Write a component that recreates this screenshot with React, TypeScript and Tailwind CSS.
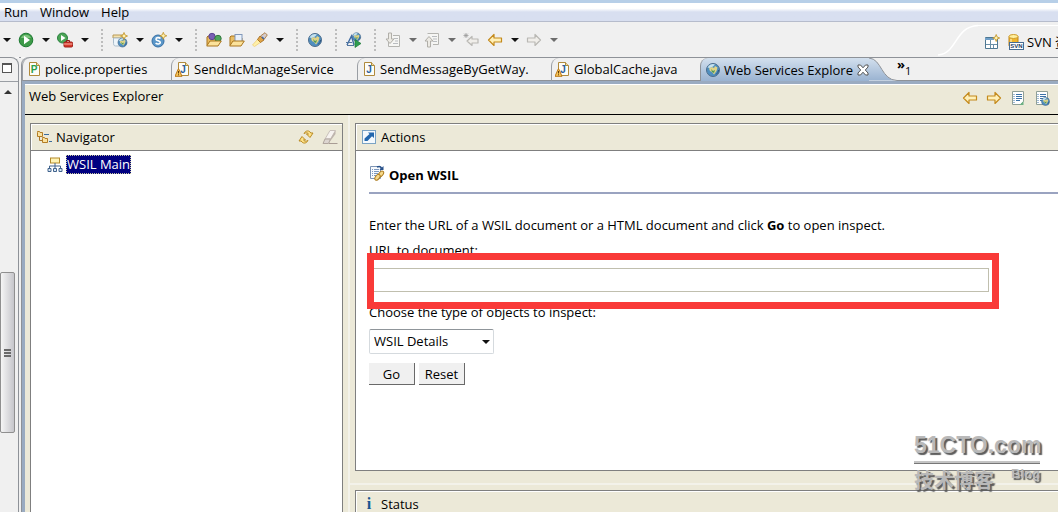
import { useState } from 'react';
import type { ReactNode } from 'react';

const MENUS = ['Run', 'Window', 'Help'];

const TABS = [
  { name: 'police.properties', icon: 'properties', width: 'w-[149px]' },
  { name: 'SendIdcManageService', icon: 'warning', width: 'w-[186px]' },
  { name: 'SendMessageByGetWay.', icon: 'java', width: 'w-[194px]' },
  { name: 'GlobalCache.java', icon: 'warning', width: 'w-[149px]' },
];

function Svg({ children }: { children: ReactNode }) {
  return (
    <svg className="w-4 h-4 shrink-0" viewBox="0 0 16 16" fill="none" aria-hidden="true">
      {children}
    </svg>
  );
}

function RunIcon() {
  return (
    <Svg>
      <circle cx="8" cy="8" r="6.8" fill="#3d9a48" stroke="#1e7a33" />
      <path d="M3 6a5.5 5.5 0 0 1 10 0z" fill="#7cc47c" />
      <path d="M6 3.8v8.4L12 8z" fill="#fff" />
    </Svg>
  );
}

function ExternalToolsIcon() {
  return (
    <Svg>
      <circle cx="5.5" cy="6" r="5" fill="#4aa455" stroke="#2b8040" />
      <path d="M4 3v6l4.5-3z" fill="#fff" />
      <path d="M9.5 10V8.5h3V10" stroke="#8a1a14" />
      <rect x="7" y="10" width="8.5" height="5" rx="1" fill="#d83a2c" stroke="#9e1d16" />
      <path d="M7 12h8.5" stroke="#f6b3a8" />
    </Svg>
  );
}

function Globe({ cx = 8, cy = 8, r = 6.5 }: { cx?: number; cy?: number; r?: number }) {
  const s = r / 6.5;
  return (
    <g transform={`translate(${cx} ${cy}) scale(${s})`}>
      <circle r="6.5" fill="#4f8fc0" stroke="#4c6c8c" />
      <path d="M-5.5-2.5A6 6 0 0 1 2-5.6L0-3.5-3-2z" fill="#c6e2ee" />
      <path d="M-4-1.5-1-3l2 1 1-2 2.5 1.5L3.5 1 1 4.5-1 2-3 1z" fill="#e0d387" />
      <path d="M-2-1 0 1l2-1-1 3-2-1z" fill="#4e9a58" />
      <path d="M3 4.5A5.5 5.5 0 0 0 5.5 0" stroke="#26507c" />
    </g>
  );
}

function Sparkle({ x = 12, y = 4 }: { x?: number; y?: number }) {
  return (
    <path
      transform={`translate(${x} ${y})`}
      d="M0-3.5 1-1 3.5 0 1 1 0 3.5-1 1-3.5 0-1-1z"
      fill="#fff3b0"
      stroke="#c08f22"
      strokeWidth="0.8"
    />
  );
}

function NewServiceIcon() {
  return (
    <Svg>
      <path d="M1 3h10v3H1z" fill="#f4e2b0" stroke="#b99a55" />
      <path d="M1.5 6h10v8h-8c-2 0-2-2-2-4z" fill="#eef5fa" stroke="#a9bccb" />
      <Globe cx={10.5} cy={10.5} r={4.5} />
      <Sparkle />
    </Svg>
  );
}

function NewServletIcon() {
  return (
    <Svg>
      <circle cx="7" cy="9" r="6" fill="#5a96c8" stroke="#366fa5" />
      <path d="M9.5 6.5C8 5 4.8 5.5 5 7.3c.2 1.9 4.3 1.2 4.3 3.2 0 1.7-3.2 2-4.7.6" stroke="#fff" strokeWidth="1.6" />
      <Sparkle x={12.3} y={3.8} />
    </Svg>
  );
}

function Folder({ children }: { children?: ReactNode }) {
  return (
    <Svg>
      <path d="M1 13V5l1-1h4l1 2h6v3" fill="#e9bd62" stroke="#a9741c" />
      {children}
      <path d="M.7 14 4 9h11.3L12 14z" fill="#fbe29b" stroke="#a9741c" />
    </Svg>
  );
}

function TorchIcon() {
  return (
    <Svg>
      <path d="m.5 13 5.5-6 3 3-6.5 4.5z" fill="#fff0a8" stroke="#edcf78" strokeWidth="0.8" />
      <path d="m5.5 7.5 2.5-3.5 4 4-3.5 2.5z" fill="#e0a548" stroke="#9b6318" strokeWidth="0.8" />
      <path d="m8.5 4 4.5-3.3L15.3 3 12 7.500z" fill="#d3cbcc" stroke="#a56d2b" strokeWidth="0.8" />
      <path d="m10 5 2 2" stroke="#3f6aa8" strokeWidth="1.5" />
    </Svg>
  );
}

function LaunchExplorerIcon() {
  return (
    <Svg>
      <Globe cx={10.5} cy={5} r={4.2} />
      <path d="M1 13 5.5 4 8 13" stroke="#3f6ba3" strokeWidth="1.4" />
      <path d="M0 10.5h6M1 13.5h7" stroke="#52769f" />
      <path d="M9 7.5v8l6-4z" fill="#2f9d50" stroke="#1d7a38" strokeWidth="0.7" />
    </Svg>
  );
}

function AnnotationIcon({ up = false }: { up?: boolean }) {
  return (
    <Svg>
      {up ? (
        <path d="M3.5 1.5h11v11H9" fill="#f6f6f4" stroke="#b4b4b0" />
      ) : (
        <path d="M8 3.5h6.5v11h-11V10" fill="#f6f6f4" stroke="#b4b4b0" />
      )}
      <path d={up ? 'M8 4.5h5M9 7h4M9 9.5h4' : 'M9 6.5h4M10 9h3M8 11.5h5'} stroke="#b9bcc0" />
      <path
        transform={up ? 'translate(0 16) scale(1 -1)' : undefined}
        d="M3.5 1h3v6H9l-4 4.5L1 7h2.5z"
        fill="#eceae4"
        stroke="#b0aea8"
      />
    </Svg>
  );
}

function ArrowIcon({ right = false, disabled = false, star = false }: { right?: boolean; disabled?: boolean; star?: boolean }) {
  return (
    <Svg>
      <path
        transform={right ? 'translate(16 0) scale(-1 1)' : undefined}
        d={star ? 'M4 9l5-4.5V7h6v4H9v2.5z' : 'M1.5 8 7 2.5V6h7.5v4H7v3.5z'}
        fill={disabled ? '#f0eeea' : '#fff0b8'}
        stroke={disabled ? '#b9b8b4' : '#c48a1c'}
        strokeWidth="1.2"
        strokeLinejoin="round"
      />
      {star && <path d="M3 1v5M.5 3.5h5M1.2 1.7l3.6 3.6M4.8 1.7 1.2 5.3" stroke="#9a9a9a" strokeWidth="0.8" />}
    </Svg>
  );
}

function PerspectiveIcon() {
  return (
    <Svg>
      <path d="M1.5 3.5h12v11h-12z" fill="#fff" stroke="#4d7792" />
      <path d="M1 4h9v2H1z" fill="#6f9fc8" />
      <path d="M6.5 6v8M2 10.5h11M9.5 10v4" stroke="#6a8fa8" />
      <Sparkle x={12.2} y={4} />
    </Svg>
  );
}

function SvnIcon() {
  return (
    <Svg>
      <path d="M1 2.5v9c1 2 8 2 9 0v-9z" fill="#f0b52c" stroke="#bf8519" />
      <ellipse cx="5.5" cy="2.5" rx="4.5" ry="2" fill="#fff0a0" stroke="#cf9c2a" />
      <path d="M3 5v6" stroke="#ffe694" strokeWidth="1.5" />
      <rect x="1.5" y="8.5" width="14" height="7" fill="#fff" stroke="#466c92" />
      <text x="8.5" y="14.3" textAnchor="middle" fontSize="6" fontWeight="bold" fontFamily="Liberation Sans, sans-serif" fill="#1d3c63">
        SVN
      </text>
    </Svg>
  );
}

function FileIcon({ kind }: { kind: string }) {
  const letter = kind === 'properties' ? 'P' : 'J';
  return (
    <Svg>
      <path d="M3.5 1.5h7l3 3v10h-10z" fill="#fdfdf8" stroke="#b08a3c" />
      <path d="M10.5 1.5v3h3" fill="#efdca8" stroke="#b08a3c" />
      <text
        x="8"
        y="12"
        textAnchor="middle"
        fontSize="10"
        fontWeight="bold"
        fontFamily="Liberation Sans, sans-serif"
        fill={kind === 'properties' ? '#28a04a' : '#2b5f9e'}
      >
        {letter}
      </text>
      {kind === 'warning' && (
        <>
          <path d="M3.5 7.5 7 15.3H0z" fill="#fbc75a" stroke="#b97716" strokeLinejoin="round" />
          <path d="M3.5 10v2.5M3.5 13.3v1" stroke="#5c3b08" />
        </>
      )}
    </Svg>
  );
}

function PageIcon({ globe = false }: { globe?: boolean }) {
  return (
    <Svg>
      <path d="M2.5 1.5h11v10l-3 3h-8z" fill="#fff" stroke="#8f9f97" />
      <path d="M6 4.5h6M6 6.5h6M6 8.5h6M6 10.5h4M3.5 4.5h1M3.5 6.5h1M3.5 8.5h1M3.5 10.5h1M3.5 12.5h1" stroke="#3c72a8" />
      {globe ? <Globe cx={11.5} cy={11.5} r={4} /> : <path d="M13.5 11v4h-4z" fill="#6db184" />}
    </Svg>
  );
}

function NavigatorIcon() {
  return (
    <Svg>
      <path d="M1.5 3.5v-1h2l.5 1h2.5v4h-5zM6.5 9.5v-1h2l.5 1h2.5v4h-5z" fill="#fbe3a0" stroke="#b47c24" />
      <path d="M3.5 8v3.5H6" stroke="#a8762c" />
      <path d="M8 5.5h5M13 12.5h3" stroke="#3d6d9c" />
    </Svg>
  );
}

function TreeIcon() {
  return (
    <Svg>
      <rect x="3.5" y="1" width="9" height="5" fill="#fff3b4" stroke="#b38a2a" />
      <path d="M8 6v5M2.5 11V9h11v2" stroke="#41638c" />
      <path d="M1 11.5h3v3H1zM6.5 11.5h3v3h-3zM12 11.5h3v3h-3z" fill="#dbe8f6" stroke="#41638c" />
    </Svg>
  );
}

function RefreshIcon() {
  return (
    <Svg>
      <path
        d="M6 4.5C7.5 1.5 11 .8 12.8 4H15l-3 4.5L8.5 5h2C9.5 3.5 7.8 3.5 6 4.5z"
        fill="#ffe38a"
        stroke="#b98a22"
        strokeLinejoin="round"
      />
      <path
        d="M10 11.5C8.5 14.5 5 15.2 3.2 12H1l3-4.5L7.5 11h-2c1 1.5 2.7 1.5 4.5.5z"
        fill="#ffe38a"
        stroke="#b98a22"
        strokeLinejoin="round"
      />
    </Svg>
  );
}

function EraserIcon() {
  return (
    <Svg>
      <path d="M8 1.5h5.5L8.5 10H3z" fill="#f6f2ef" stroke="#c9c1bb" />
      <path d="M3 10h5.5l-2 4.5H1z" fill="#ddd6d1" stroke="#b0a59e" />
      <path d="m8.5 10 5-8.5V5l-7 9.5z" fill="#bdb3ac" />
      <path d="M7 14.5h8.5" stroke="#a89c94" />
    </Svg>
  );
}

function ActionsIcon() {
  return (
    <Svg>
      <rect x="1.5" y="1.5" width="13" height="13" fill="#f4f9fd" stroke="#7ba3c4" />
      <path d="M7 3.5h6V9l-2-1.700-4.500 4.700H3.500V9.500L8.500 5z" fill="#2367ae" />
    </Svg>
  );
}

function OpenWsilIcon() {
  return (
    <Svg>
      <path d="M1.5 1.5h10v12h-10z" fill="#f7fafd" stroke="#7d94b4" />
      <path d="M5 4.5h5M5 6.5h5M5 8.5h4M5 10.5h2M3 4.5h1M3 6.5h1M3 8.5h1M3 10.5h1" stroke="#7c98bf" />
      <path d="M8 2c2-1 4-.5 5 1.5" stroke="#27508a" strokeWidth="1.4" />
      <path d="M14.5 1v4h-4z" fill="#27508a" />
      <ellipse cx="12" cy="9" rx="2" ry="3.3" transform="rotate(40 12 9)" fill="#f7d98a" stroke="#ab7a1d" />
      <ellipse cx="8.5" cy="12.3" rx="2" ry="3.3" transform="rotate(40 8.5 12.3)" fill="#f7d98a" stroke="#ab7a1d" />
    </Svg>
  );
}

function Caret({ muted = false }: { muted?: boolean }) {
  return (
    <svg className="w-2 h-1 shrink-0" viewBox="0 0 8 4" aria-hidden="true">
      <path d="M0 0h8L4 4z" fill={muted ? '#6c6c6c' : '#111'} />
    </svg>
  );
}

function Tool({ label, children }: { label: string; children: ReactNode }) {
  return (
    <button type="button" aria-label={label} className="shrink-0">
      {children}
    </button>
  );
}

function Drop({ label, muted, first }: { label: string; muted?: boolean; first?: boolean }) {
  return (
    <button
      type="button"
      aria-label={label}
      className={`w-[23px] h-4 shrink-0 flex items-center justify-center ${first ? '-ml-[5px]' : ''}`}
    >
      <Caret muted={muted} />
    </button>
  );
}

function Separator() {
  return <span className="h-[22px] shrink-0 border-l-2 border-dotted border-[#bdbdbd] ml-[5px] mr-[9px]" />;
}

function Toolbar() {
  return (
    <div className="h-9 flex bg-[#f0f0f0]">
      <div className="flex-1 min-w-0 flex items-center overflow-hidden border-b border-[#f8f8f8]">
        <Drop label="Debug menu" first />
        <Tool label="Run"><RunIcon /></Tool>
        <Drop label="Run menu" />
        <Tool label="External tools"><ExternalToolsIcon /></Tool>
        <Drop label="External tools menu" />
        <Separator />
        <Tool label="New web service"><NewServiceIcon /></Tool>
        <Drop label="New web service menu" />
        <Tool label="New servlet"><NewServletIcon /></Tool>
        <Drop label="New servlet menu" />
        <Separator />
        <div className="flex gap-[7px]">
          <Tool label="Open type">
            <Folder>
              <circle cx="6" cy="4.5" r="3.2" fill="#7a5fb4" stroke="#5b4593" />
              <circle cx="12" cy="6.5" r="3.2" fill="#4ea55d" stroke="#33793f" />
            </Folder>
          </Tool>
          <Tool label="Open task">
            <Folder>
              <rect x="6" y="2.5" width="7" height="8" fill="#eaf1fa" stroke="#8198ba" />
            </Folder>
          </Tool>
          <Tool label="Search"><TorchIcon /></Tool>
        </div>
        <Drop label="Search menu" />
        <Separator />
        <Tool label="Open web browser"><Svg><Globe /></Svg></Tool>
        <span className="w-[7px]" />
        <Separator />
        <Tool label="Launch the Web Services Explorer"><LaunchExplorerIcon /></Tool>
        <span className="w-[7px]" />
        <Separator />
        <Tool label="Next annotation"><AnnotationIcon /></Tool>
        <Drop label="Next annotation menu" muted />
        <Tool label="Previous annotation"><AnnotationIcon up /></Tool>
        <Drop label="Previous annotation menu" muted />
        <div className="flex gap-2">
          <Tool label="Last edit location"><ArrowIcon star disabled /></Tool>
          <Tool label="Back"><ArrowIcon /></Tool>
        </div>
        <Drop label="Back menu" />
        <Tool label="Forward"><ArrowIcon right disabled /></Tool>
        <Drop label="Forward menu" muted />
      </div>
      <svg className="w-10 h-9 shrink-0" viewBox="0 0 40 36" fill="none" aria-hidden="true">
        <path d="M0 33C20 31 16 5 40 3.5" stroke="#fff" strokeWidth="1.5" />
      </svg>
      <div className="w-20 shrink-0 pt-[3px] overflow-hidden">
        <div className="h-8 flex items-center border-t border-white pl-1.5">
          <Tool label="Open perspective"><PerspectiveIcon /></Tool>
          <button type="button" className="flex items-center gap-[3px] ml-2 whitespace-nowrap">
            <SvnIcon />
            SVN 资
          </button>
        </div>
      </div>
    </div>
  );
}

function TabBar() {
  return (
    <div role="tablist" className="h-6 flex border-t border-[#8e9298] bg-[#f0f0f0] rounded-tl-lg">
      {TABS.map((tab) => (
        <button
          key={tab.name}
          type="button"
          role="tab"
          aria-selected={false}
          className={`${tab.width} shrink-0 flex items-center gap-[3px] pl-[3px] border-l border-b border-[#9a9ea4] border-b-[#8e9298] rounded-tl-lg whitespace-nowrap`}
        >
          <FileIcon kind={tab.icon} />
          {tab.name}
        </button>
      ))}
      <div className="shrink-0 flex items-center border-l border-[#8e9298] rounded-tl-lg bg-linear-to-b from-[#d3e0ee] to-[#9ab3d1]">
        <button type="button" role="tab" aria-selected className="h-full flex items-center gap-[3px] pl-1 whitespace-nowrap">
          <Svg><Globe /></Svg>
          Web Services Explore
        </button>
        <button type="button" aria-label="Close" className="ml-1">
          <svg className="w-3 h-3" viewBox="0 0 12 12" aria-hidden="true">
            <path d="M1 1h2.5L6 3.8 8.5 1H11v2L8.3 6 11 9v2H8.5L6 8.2 3.5 11H1V9l2.7-3L1 3z" fill="#fff" stroke="#555" />
          </svg>
        </button>
      </div>
      <svg className="w-7 h-[23px] shrink-0" viewBox="0 0 28 23" aria-hidden="true">
        <defs>
          <linearGradient id="tabFill" x1="0" y1="0" x2="0" y2="1">
            <stop offset="0" stopColor="#d3e0ee" />
            <stop offset="1" stopColor="#9ab3d1" />
          </linearGradient>
        </defs>
        <path d="M0 0C13 1 12 22 28 22.5H0z" fill="url(#tabFill)" />
        <path d="M0 0C13 1 12 22 28 22.5" fill="none" stroke="#8e9298" />
      </svg>
      <button type="button" aria-label="Show 1 more tab" className="flex-1 min-w-0 flex items-start text-left border-b border-[#8e9298]">
        <span className="text-[13px] leading-3 font-bold">»</span>
        <span className="text-[11px] leading-[26px]">1</span>
      </button>
    </div>
  );
}

function LeftStrip() {
  return (
    <div className="w-[19px] shrink-0 flex flex-col border-t border-r border-[#8e9298] rounded-tr-lg bg-[#f0f0f0]">
      <div className="h-6 shrink-0 flex items-center border-b border-[#9a9ea4] pl-0.5 pb-1">
        <button type="button" aria-label="Maximize" className="w-2.5 h-2.5 bg-white border border-t-2 border-[#555]" />
      </div>
      <button type="button" aria-label="Scroll up" className="h-5 w-4 shrink-0 flex items-center justify-center">
        <svg className="w-2 h-1" viewBox="0 0 8 4" aria-hidden="true">
          <path d="M0 4h8L4 0z" fill="#333" />
        </svg>
      </button>
      <div className="flex-1 flex flex-col w-[15px]">
        <div className="flex-[43]" />
        <div className="flex-[40] flex flex-col items-center justify-center gap-px rounded-xs border border-[#8f8f8f] bg-linear-to-r from-[#f5f5f5] to-[#c6c6cb]">
          <span className="w-[7px] h-0.5 bg-[#6a6a6a]" />
          <span className="w-[7px] h-0.5 bg-[#6a6a6a]" />
          <span className="w-[7px] h-0.5 bg-[#6a6a6a]" />
        </div>
        <div className="flex-[20]" />
      </div>
    </div>
  );
}

function PaneTitle({ icon, title, children }: { icon: ReactNode; title: string; children?: ReactNode }) {
  return (
    <div className="h-[26px] shrink-0 flex items-center gap-1 pl-1 pr-1 pb-0.5 bg-[#ece9d8] border-t border-l border-white">
      {icon}
      <h2 className="flex-1">{title}</h2>
      {children}
    </div>
  );
}

function ActionsForm() {
  const [url, setUrl] = useState('');
  const [type, setType] = useState('WSIL Details');

  return (
    <form
      className="flex-1 min-h-0 overflow-hidden pl-[13px] pt-3.5 bg-white border-t border-[#7f7f7f]"
      onSubmit={(e) => e.preventDefault()}
      onReset={() => {
        setUrl('');
        setType('WSIL Details');
      }}
    >
      <div className="flex items-start gap-1 h-[27px]">
        <OpenWsilIcon />
        <h3 className="font-bold leading-5">Open WSIL</h3>
      </div>
      <div className="h-0.5 bg-[#9aa3c0]" />
      <p className="mt-[21px] leading-5">
        Enter the URL of a WSIL document or a HTML document and click <b>Go</b> to open inspect.
      </p>
      <label htmlFor="url" className="block mt-[5px] leading-5">URL to document:</label>
      <div className="relative mt-2 w-[90%]">
        <input
          id="url"
          type="text"
          value={url}
          onChange={(e) => setUrl(e.target.value)}
          className="block w-full h-6 px-1 bg-white border border-[#c0bfae] outline-none"
        />
        {/* Highlight frame around the URL field */}
        <div className="absolute -top-[15px] -bottom-[17px] -left-0.5 -right-2.5 border-[7px] border-[#f93a38] pointer-events-none" />
      </div>
      <label htmlFor="type" className="block mt-2.5 leading-5">Choose the type of objects to inspect:</label>
      <div className="relative mt-[7px] w-[125px]">
        <select
          id="type"
          value={type}
          onChange={(e) => setType(e.target.value)}
          className="block appearance-none w-full h-[25px] pl-1 pb-0.5 bg-white border border-[#d5dade] border-t-[#8f959a] rounded-xs outline-none"
        >
          <option>WSIL Details</option>
        </select>
        <span className="absolute right-1 top-0 h-full flex items-center pointer-events-none">
          <Caret />
        </span>
      </div>
      <div className="flex gap-1 mt-[9px]">
        <button type="submit" className="w-[46px] h-[22px] bg-[#f0f0f0] border-r border-b border-[#696969]">Go</button>
        <button type="reset" className="w-[46px] h-[22px] bg-[#f0f0f0] border-r border-b border-[#696969]">Reset</button>
      </div>
    </form>
  );
}

function Explorer() {
  return (
    <div className="flex-1 min-h-0 flex flex-col border-t-3 border-l-3 border-[#9aabc1] bg-[#ece9d8]">
      <div className="h-[31px] shrink-0 flex items-start justify-between pl-1 pr-2 border-t border-t-white border-b border-b-black">
        <h1 className="leading-[22px]">Web Services Explorer</h1>
        <div className="flex gap-2 pt-[5px]">
          <Tool label="Back"><ArrowIcon /></Tool>
          <Tool label="Forward"><ArrowIcon right /></Tool>
          <Tool label="WSIL page"><PageIcon /></Tool>
          <Tool label="WSDL page"><PageIcon globe /></Tool>
        </div>
      </div>
      <div className="flex-1 min-h-0 flex">
        <section className="w-[318px] shrink-0 flex flex-col pl-[5px] pt-2">
          <div className="flex-1 flex flex-col border border-b-0 border-[#7f7f7f] bg-white">
            <PaneTitle icon={<NavigatorIcon />} title="Navigator">
              <div className="flex gap-2">
                <Tool label="Refresh"><RefreshIcon /></Tool>
                <Tool label="Clear"><EraserIcon /></Tool>
              </div>
            </PaneTitle>
            <div className="flex-1 border-t border-[#7f7f7f] pl-4 pt-1">
              <a href="#wsil" className="inline-flex items-center gap-[3px]">
                <TreeIcon />
                <span className="leading-[17px] bg-[#000080] text-white border border-dotted border-[#c8c89a]">WSIL Main</span>
              </a>
            </div>
          </div>
        </section>
        <div className="w-0.5 shrink-0 ml-[5px] mr-[5px] bg-[#f3f2ea]" />
        <section className="flex-1 min-w-0 flex flex-col pt-2">
          <div className="flex-1 min-h-0 flex flex-col border border-r-0 border-[#7f7f7f]">
            <PaneTitle icon={<ActionsIcon />} title="Actions" />
            <ActionsForm />
          </div>
          <div className="h-0.5 shrink-0 mt-3 mb-[5px] -ml-[5px] bg-[#f3f2ea]" />
          <div className="h-[22px] shrink-0 overflow-hidden border-t border-l border-[#7f7f7f]">
            <PaneTitle
              icon={<span className="w-4 text-center font-bold text-base leading-5 font-['Liberation_Serif',serif] text-[#17568f]">i</span>}
              title="Status"
            />
          </div>
        </section>
      </div>
    </div>
  );
}

export default function App() {
  return (
    <div className="relative h-screen flex flex-col overflow-hidden bg-[#f0f0f0] text-[13px] leading-4 text-black font-['Open_Sans','Noto_Sans_CJK_SC',sans-serif]">
      <nav className="h-[22px] shrink-0 flex items-center gap-3 pl-1 border-t-3 border-t-[#b7cfe8] border-b border-b-[#b6bccc] bg-linear-to-b from-white from-30% to-[#d8dff0] to-50%">
        {MENUS.map((menu) => (
          <button key={menu} type="button">{menu}</button>
        ))}
      </nav>
      <Toolbar />
      <div className="flex-1 min-h-0 flex -mt-px">
        <LeftStrip />
        <div className="w-0.5 shrink-0 border-t border-[#8e9298]" />
        <div className="flex-1 min-w-0 flex flex-col border-l border-[#8e9298] rounded-tl-lg">
          <TabBar />
          <Explorer />
        </div>
      </div>

      {/* Watermark */}
      <div className="absolute right-[18px] bottom-4 w-[126px] text-[#b9b9b9] [text-shadow:2px_2px_1px_#5c5c5c] pointer-events-none">
        <div className="text-[23px] leading-8 font-bold whitespace-nowrap font-['Liberation_Sans',sans-serif]">51CTO.com</div>
        <div className="h-[3px] bg-[#c4c4c4] border-b border-[#777]" />
        <div className="flex justify-between font-bold">
          <span className="text-[20px] leading-8 font-['Noto_Sans_CJK_SC',sans-serif]">技术博客</span>
          <span className="text-[13px] leading-5 font-['Liberation_Sans',sans-serif]">Blog</span>
        </div>
      </div>
    </div>
  );
}
